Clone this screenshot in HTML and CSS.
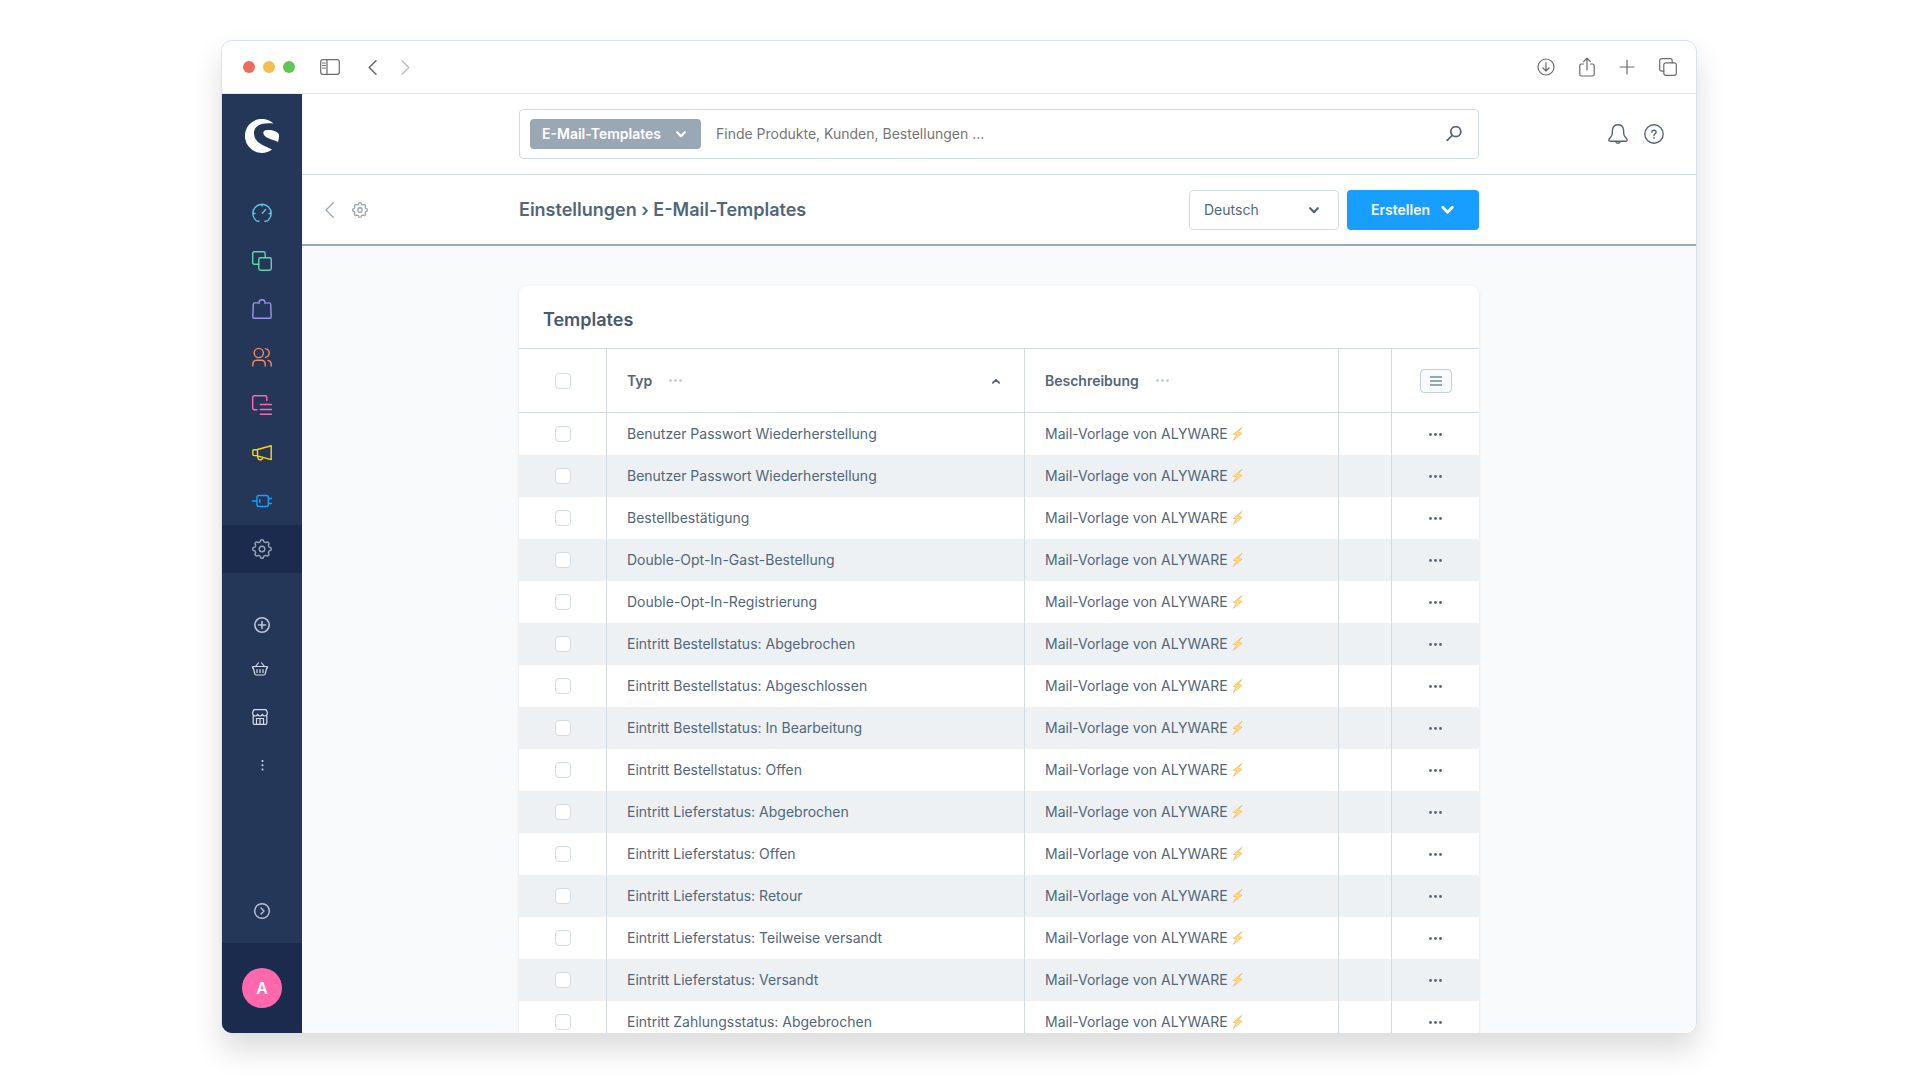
FILE: index.html
```html
<!DOCTYPE html>
<html lang="de">
<head>
<meta charset="utf-8">
<title>E-Mail-Templates</title>
<link rel="stylesheet" href="styles.css">
</head>
<body>
<svg class="sprite" aria-hidden="true">
  <symbol id="gear" viewBox="0 0 20 20"><path d="M8.2 2.9 8.7 1.2Q10 .4 11.3 1.2L11.8 2.9 13.7 3.7 15.3 2.9Q16.7 3.3 17.1 4.7L16.3 6.3 17.1 8.2 18.8 8.7Q19.6 10 18.8 11.3L17.1 11.8 16.3 13.7 17.1 15.3Q16.7 16.7 15.3 17.1L13.7 16.3 11.8 17.1 11.3 18.8Q10 19.6 8.7 18.8L8.2 17.1 6.3 16.3 4.7 17.1Q3.3 16.7 2.9 15.3L3.7 13.7 2.9 11.8 1.2 11.3Q.4 10 1.2 8.7L2.9 8.2 3.7 6.3 2.9 4.7Q3.3 3.3 4.7 2.9L6.3 3.7Z"/><circle cx="10" cy="10" r="2.8"/></symbol>
  <symbol id="chev" viewBox="0 0 10 10"><path d="M1.8 3.5 5 6.8 8.2 3.5"/></symbol>
  <symbol id="dots" viewBox="0 0 13 3"><circle cx="1.500" cy="1.500" r="1.4"/><circle cx="6.5" cy="1.5" r="1.4"/><circle cx="11.5" cy="1.5" r="1.4"/></symbol>
  <symbol id="bolt" viewBox="0 0 11 14"><path d="M9.6.6 1.2 7.4 4.7 7.9 1.3 13.4 10 6.2 6.3 5.6Z" fill="#ffe08a" stroke="#fbbd5c" stroke-width=".9" stroke-linejoin="round"/></symbol>
</svg>
<div class="window">
  <header class="titlebar">
    <span class="light light--red"></span><span class="light light--yellow"></span><span class="light light--green"></span>
    <svg class="tb-sidebar" width="20" height="16" viewBox="0 0 20 16"><rect x=".7" y=".7" width="18.6" height="14.6" rx="2"/><path d="M7 1v14M2.5 4h2.800M2.5 6.5h2.8M2.5 9h2.8"/></svg>
    <svg class="tb-back" width="9" height="15" viewBox="0 0 9 15"><path d="M8 .8 1.2 7.5 8 14.2"/></svg>
    <svg class="tb-forward" width="9" height="15" viewBox="0 0 9 15"><path d="M1 .8 7.8 7.5 1 14.2"/></svg>
    <div class="tb-actions">
      <svg width="18" height="18" viewBox="0 0 18 18"><circle cx="9" cy="9" r="8"/><path d="M9 4.5v8.500M5.700 9.800 9 13l3.300-3.200"/></svg>
      <svg width="16" height="20" viewBox="1 0 16 20"><path d="M5.500 7H3.500Q1.800 7 1.800 8.700V17.200Q1.800 19 3.500 19H14.500Q16.200 19 16.200 17.200V8.700Q16.200 7 14.500 7H12.500M9 13V1.500M5.700 4.500 9 1.200 12.300 4.500"/></svg>
      <svg width="16" height="18" viewBox="0 0 16 18"><path d="M8 2v14M1 9h14"/></svg>
      <svg width="18" height="18" viewBox="0 0 18 18"><rect x="4.800" y="4.800" width="12.500" height="12.500" rx="2"/><path d="M4.800 13.200H2.700Q.7 13.200.7 11.200V2.700Q.7.700 2.700.7H11.200Q13.200.7 13.200 2.700V4.800"/></svg>
    </div>
  </header>
  <div class="app">
    <nav class="sidebar" aria-label="Hauptmenü">
      <a class="logo" href="#" aria-label="Shopware"><svg width="34" height="34" viewBox="0 0 34 34"><path d="M28.6 4.6A17 17 0 1 0 27 30.600C23 27.400 9.200 25.800 9 14C8.900 6.300 17.500 3.300 28.600 4.600ZM18.300 14C18.300 11.600 20.500 11 23.500 11C28.500 11.100 32.400 12.700 33.800 15.300Q34.400 19 33 23C28.500 20.300 18.600 19.500 18.300 14Z"/></svg></a>
      <a class="nav c-cyan" href="#" aria-label="Dashboard"><svg width="20" height="20" viewBox="0 0 20 20"><path d="M7 18.200Q4.500 18.500 3.600 17A9.200 9.200 0 1 1 16.400 17Q15.500 18.500 13 18.200M10 .9V3M.9 10.500H3M17 10.500H19.100M10.300 10.300 13.700 6.500"/></svg></a>
      <a class="nav c-green" href="#" aria-label="Kataloge"><svg width="20" height="20" viewBox="0 0 20 20"><rect x="6.800" y="6.800" width="12.500" height="12.500" rx="1.700"/><path d="M6.500 13.200H2.400Q.7 13.200.7 11.500V2.400Q.7.700 2.400.7H11.500Q13.200.7 13.200 2.400V6.500"/></svg></a>
      <a class="nav c-violet" href="#" aria-label="Bestellungen"><svg width="20" height="20" viewBox="0 0 20 20"><path d="M5.500 3.900H2.800Q1.400 3.900 1.300 5.300L.8 17.700Q.8 19.200 2.300 19.200H17.700Q19.200 19.200 19.200 17.700L18.700 5.300Q18.600 3.900 17.200 3.900H14.500M7 4.500V3.200Q7.300.8 10 .8T13 3.200V4.500"/></svg></a>
      <a class="nav c-orange" href="#" aria-label="Kunden"><svg width="20" height="20" viewBox="0 0 20 20"><circle cx="6.800" cy="6" r="4.600"/><path d="M.8 19V17Q1 13.500 4.500 13.300H9.500Q13 13.500 13.200 17V19M13.500 1.600Q17.300 2.500 17.200 6T13.500 10.400M16 13.400Q19.100 14 19.200 17.300V19"/></svg></a>
      <a class="nav c-pink" href="#" aria-label="Inhalte"><svg width="20" height="20" viewBox="0 0 20 20"><path d="M5 14.800H2.400Q.7 14.800.7 13.100V2.400Q.7.700 2.400.7H13.100Q14.800.7 14.800 2.400V5.500M8.300 9.500H19.500M8.300 14.500H19.500M8.300 19.300H19.500"/></svg></a>
      <a class="nav c-yellow" href="#" aria-label="Marketing"><svg width="20" height="20" viewBox="0 0 20 20"><path d="M5.500 6.500 19.200 2.800V16.600L5.500 12.800ZM5.500 6.700H2.200Q.8 6.700.8 8V11.300Q.8 12.600 2.200 12.600H5.500M5.500 12.800Q6 16.800 8.200 16.800T10.800 14.300"/></svg></a>
      <a class="nav c-blue" href="#" aria-label="Erweiterungen"><svg width="20" height="20" viewBox="0 0 20 20"><path d="M.5 10H4.800M16.500 7.500H19.500M16.500 12.500H19.500M7.800 8.500V11.500"/><rect x="4.900" y="4.500" width="11.500" height="11" rx="2"/></svg></a>
      <a class="nav nav--active" href="#" aria-label="Einstellungen"><svg width="20" height="20"><use href="#gear"/></svg></a>
      <a class="nav nav--add" href="#" aria-label="Hinzufügen"><svg width="16" height="16" viewBox="0 0 16 16"><circle cx="8" cy="8" r="7.200"/><path d="M8 4.500V11.500M4.500 8H11.500"/></svg></a>
      <a class="nav nav--channel" href="#" aria-label="Storefront"><svg width="16" height="16" viewBox="0 0 16 16"><path d="M.7 5.500H15.300V7.200H14.600L13.200 13Q13 14 12 14H4Q3 14 2.800 13L1.400 7.200H.7ZM3.500 5.500 6.300 2M12.500 5.500 9.700 2M5 8.500V11.500M8 8.500V11.500M11 8.500V11.500"/></svg></a>
      <a class="nav nav--channel" href="#" aria-label="Shop"><svg width="16" height="16" viewBox="0 0 16 16"><path d="M1.200 6.500V14.200Q1.200 15.300 2.300 15.300H13.700Q14.800 15.300 14.800 14.200V6.500M1.800.7H14.200L15.300 3.500V5Q14.500 7 12.800 7T10.400 5.200Q9.700 7 8 7T5.600 5.200Q4.900 7 3.200 7T.7 5V3.500ZM4.500 15V9.500H11.500V15M8 9.500V15"/></svg></a>
      <a class="nav nav--more" href="#" aria-label="Mehr"><svg width="3" height="13" viewBox="0 0 3 13"><circle cx="1.500" cy="2" r="1"/><circle cx="1.500" cy="6.200" r="1"/><circle cx="1.500" cy="10.400" r="1"/></svg></a>
      <button class="collapse" aria-label="Menü ausklappen"><svg width="16" height="16" viewBox="0 0 16 16"><circle cx="8" cy="8" r="7.300"/><path d="M7 5 10 8 7 11"/></svg></button>
      <div class="user"><button class="avatar">A</button></div>
    </nav>
    <main class="main">
      <div class="topbar">
        <div class="column">
          <form class="search">
            <button class="chip" type="button">E-Mail-Templates<svg class="chev" width="12" height="12"><use href="#chev"/></svg></button>
            <input class="search-input" type="text" placeholder="Finde Produkte, Kunden, Bestellungen ..." aria-label="Suche">
            <button class="icon-button" aria-label="Suchen"><svg width="16" height="16" viewBox="0 0 16 16"><circle cx="9.800" cy="5.700" r="5"/><path d="M6.200 9.300 1.200 14.300"/></svg></button>
          </form>
        </div>
        <div class="top-actions">
          <button class="icon-button" aria-label="Benachrichtigungen"><svg width="20" height="20" viewBox="0 0 20 20"><path d="M10 .8Q5.300.8 4.500 5.500L4.200 10Q4.100 12 2 14Q.8 15.100.8 16.200Q.8 17.200 2.300 17.200H17.700Q19.200 17.200 19.200 16.200Q19.200 15.100 18 14Q15.900 12 15.800 10L15.500 5.500Q14.700.8 10 .8ZM7.800 17.500Q8 19.200 10 19.200T12.200 17.500"/></svg></button>
          <button class="icon-button" aria-label="Hilfe"><svg width="20" height="20" viewBox="0 0 20 20"><circle cx="10" cy="10" r="9.200"/><path d="M7.900 8.200Q7.900 6.200 10 6.200T12.100 8.100Q12.100 9.300 10.900 9.900Q10 10.400 10 11.500M10 13.500V14.200"/></svg></button>
        </div>
      </div>
      <div class="smartbar">
        <div class="smart-nav">
          <a href="#" aria-label="Zurück"><svg width="9" height="16" viewBox="0 0 9 16"><path d="M8.300.7 1 8 8.300 15.300"/></svg></a>
          <a href="#" aria-label="Einstellungen"><svg class="smart-gear" width="16" height="16"><use href="#gear"/></svg></a>
        </div>
        <div class="column">
          <h1 class="title">Einstellungen › E-Mail-Templates</h1>
          <div class="language"><select class="language-select" aria-label="Sprache"><option>Deutsch</option></select><svg class="chev" width="12" height="12"><use href="#chev"/></svg></div>
          <button class="create">Erstellen<svg class="chev" width="15" height="15"><use href="#chev"/></svg></button>
        </div>
      </div>
      <div class="content">
        <section class="card">
          <h2 class="card-title">Templates</h2>
          <table class="grid">
            <colgroup><col class="w-check"><col class="w-type"><col class="w-desc"><col class="w-gap"><col class="w-act"></colgroup>
            <thead><tr>
              <th class="center"><input type="checkbox" aria-label="Alle auswählen"></th>
              <th><div class="head">Typ<svg class="head-dots" width="13" height="3"><use href="#dots"/></svg><svg class="chev sort" width="10" height="10" viewBox="0 0 10 10"><path d="M1.800 6.800 5 3.800 8.200 6.800"/></svg></div></th>
              <th><div class="head">Beschreibung<svg class="head-dots" width="13" height="3"><use href="#dots"/></svg></div></th>
              <th></th>
              <th class="center"><button class="columns" aria-label="Spalten"><svg width="12" height="12" viewBox="0 0 12 12"><path d="M0 2H12M0 6H12M0 10H12"/></svg></button></th>
            </tr></thead>
            <tbody>
              <tr><td class="center"><input type="checkbox" aria-label="Auswählen"></td><td>Benutzer Passwort Wiederherstellung</td><td>Mail-Vorlage von ALYWARE <svg class="bolt"><use href="#bolt"/></svg></td><td></td><td class="center"><button class="more" aria-label="Aktionen"><svg width="13" height="3"><use href="#dots"/></svg></button></td></tr>
              <tr><td class="center"><input type="checkbox" aria-label="Auswählen"></td><td>Benutzer Passwort Wiederherstellung</td><td>Mail-Vorlage von ALYWARE <svg class="bolt"><use href="#bolt"/></svg></td><td></td><td class="center"><button class="more" aria-label="Aktionen"><svg width="13" height="3"><use href="#dots"/></svg></button></td></tr>
              <tr><td class="center"><input type="checkbox" aria-label="Auswählen"></td><td>Bestellbestätigung</td><td>Mail-Vorlage von ALYWARE <svg class="bolt"><use href="#bolt"/></svg></td><td></td><td class="center"><button class="more" aria-label="Aktionen"><svg width="13" height="3"><use href="#dots"/></svg></button></td></tr>
              <tr><td class="center"><input type="checkbox" aria-label="Auswählen"></td><td>Double-Opt-In-Gast-Bestellung</td><td>Mail-Vorlage von ALYWARE <svg class="bolt"><use href="#bolt"/></svg></td><td></td><td class="center"><button class="more" aria-label="Aktionen"><svg width="13" height="3"><use href="#dots"/></svg></button></td></tr>
              <tr><td class="center"><input type="checkbox" aria-label="Auswählen"></td><td>Double-Opt-In-Registrierung</td><td>Mail-Vorlage von ALYWARE <svg class="bolt"><use href="#bolt"/></svg></td><td></td><td class="center"><button class="more" aria-label="Aktionen"><svg width="13" height="3"><use href="#dots"/></svg></button></td></tr>
              <tr><td class="center"><input type="checkbox" aria-label="Auswählen"></td><td>Eintritt Bestellstatus: Abgebrochen</td><td>Mail-Vorlage von ALYWARE <svg class="bolt"><use href="#bolt"/></svg></td><td></td><td class="center"><button class="more" aria-label="Aktionen"><svg width="13" height="3"><use href="#dots"/></svg></button></td></tr>
              <tr><td class="center"><input type="checkbox" aria-label="Auswählen"></td><td>Eintritt Bestellstatus: Abgeschlossen</td><td>Mail-Vorlage von ALYWARE <svg class="bolt"><use href="#bolt"/></svg></td><td></td><td class="center"><button class="more" aria-label="Aktionen"><svg width="13" height="3"><use href="#dots"/></svg></button></td></tr>
              <tr><td class="center"><input type="checkbox" aria-label="Auswählen"></td><td>Eintritt Bestellstatus: In Bearbeitung</td><td>Mail-Vorlage von ALYWARE <svg class="bolt"><use href="#bolt"/></svg></td><td></td><td class="center"><button class="more" aria-label="Aktionen"><svg width="13" height="3"><use href="#dots"/></svg></button></td></tr>
              <tr><td class="center"><input type="checkbox" aria-label="Auswählen"></td><td>Eintritt Bestellstatus: Offen</td><td>Mail-Vorlage von ALYWARE <svg class="bolt"><use href="#bolt"/></svg></td><td></td><td class="center"><button class="more" aria-label="Aktionen"><svg width="13" height="3"><use href="#dots"/></svg></button></td></tr>
              <tr><td class="center"><input type="checkbox" aria-label="Auswählen"></td><td>Eintritt Lieferstatus: Abgebrochen</td><td>Mail-Vorlage von ALYWARE <svg class="bolt"><use href="#bolt"/></svg></td><td></td><td class="center"><button class="more" aria-label="Aktionen"><svg width="13" height="3"><use href="#dots"/></svg></button></td></tr>
              <tr><td class="center"><input type="checkbox" aria-label="Auswählen"></td><td>Eintritt Lieferstatus: Offen</td><td>Mail-Vorlage von ALYWARE <svg class="bolt"><use href="#bolt"/></svg></td><td></td><td class="center"><button class="more" aria-label="Aktionen"><svg width="13" height="3"><use href="#dots"/></svg></button></td></tr>
              <tr><td class="center"><input type="checkbox" aria-label="Auswählen"></td><td>Eintritt Lieferstatus: Retour</td><td>Mail-Vorlage von ALYWARE <svg class="bolt"><use href="#bolt"/></svg></td><td></td><td class="center"><button class="more" aria-label="Aktionen"><svg width="13" height="3"><use href="#dots"/></svg></button></td></tr>
              <tr><td class="center"><input type="checkbox" aria-label="Auswählen"></td><td>Eintritt Lieferstatus: Teilweise versandt</td><td>Mail-Vorlage von ALYWARE <svg class="bolt"><use href="#bolt"/></svg></td><td></td><td class="center"><button class="more" aria-label="Aktionen"><svg width="13" height="3"><use href="#dots"/></svg></button></td></tr>
              <tr><td class="center"><input type="checkbox" aria-label="Auswählen"></td><td>Eintritt Lieferstatus: Versandt</td><td>Mail-Vorlage von ALYWARE <svg class="bolt"><use href="#bolt"/></svg></td><td></td><td class="center"><button class="more" aria-label="Aktionen"><svg width="13" height="3"><use href="#dots"/></svg></button></td></tr>
              <tr><td class="center"><input type="checkbox" aria-label="Auswählen"></td><td>Eintritt Zahlungsstatus: Abgebrochen</td><td>Mail-Vorlage von ALYWARE <svg class="bolt"><use href="#bolt"/></svg></td><td></td><td class="center"><button class="more" aria-label="Aktionen"><svg width="13" height="3"><use href="#dots"/></svg></button></td></tr>
            </tbody>
          </table>
        </section>
      </div>
    </main>
  </div>
</div>
</body>
</html>
```
FILE: styles.css
```css
*, *::before, *::after { box-sizing: border-box; }

body {
  margin: 0;
  height: 100vh;
  padding: 40px 223px 46px 221px;
  background: #fff;
  color: #52667a;
  font: 14px/20px Inter, "Liberation Sans", sans-serif;
}

button, input, select { font: inherit; color: inherit; margin: 0; }
button { border: 0; padding: 0; background: none; display: flex; align-items: center; }
a { color: inherit; display: flex; }
svg { fill: none; stroke: currentColor; stroke-width: 1.4; stroke-linecap: round; stroke-linejoin: round; flex: none; display: block; }
.sprite { display: none; }
.chev { stroke-width: 1.8; }

.window {
  height: 100%;
  display: flex;
  flex-direction: column;
  border: 1px solid #d9e1ec;
  border-radius: 11px;
  overflow: hidden;
  box-shadow: 0 16px 30px rgba(0, 0, 0, .14);
}

/* Browser title bar */
.titlebar {
  flex: none;
  height: 53px;
  padding: 0 19px 0 21px;
  display: flex;
  align-items: center;
  gap: 8px;
  border-bottom: 1px solid #e3e7ec;
  color: #6b6b6b;
}
.titlebar svg { stroke-width: 1.2; }
.light { width: 12px; height: 12px; border-radius: 50%; }
.light--red { background: #ed6a5e; }
.light--yellow { background: #f5bf4f; }
.light--green { background: #61c554; }
.tb-sidebar { margin-left: 17px; }
.titlebar .tb-back { margin-left: 20px; stroke-width: 1.6; }
.tb-forward { margin-left: 16px; color: #bbb; }
.tb-actions { margin-left: auto; display: flex; align-items: center; gap: 24px; }

.app { flex: 1; min-height: 0; display: flex; }

/* Navigation */
.sidebar {
  flex: none;
  width: 80px;
  display: flex;
  flex-direction: column;
  background: #243758;
  color: #b9c5d8;
}
.logo { height: 95px; padding: 25px 0 0 23px; }
.logo svg { fill: #fff; stroke: none; }
.nav { flex: none; height: 48px; align-items: center; justify-content: center; }
.nav--active { background: #1a2b4e; color: #98a6b8; }
.nav--add { margin-top: 32px; height: 40px; }
.nav--add svg { stroke-width: 1.6; }
.nav--channel { padding-right: 4px; color: #d5deea; }
.nav--channel svg { stroke-width: 1.2; }
.nav--more svg { fill: #d5deea; stroke: none; }
.c-cyan { color: #5ac8e4; }
.c-green { color: #57d9a3; }
.c-violet { color: #a092f0; }
.c-orange { color: #f88962; }
.c-pink { color: #ff68b4; }
.c-yellow { color: #ffd700; }
.c-blue { color: #189eff; }
.collapse { margin-top: auto; height: 64px; justify-content: center; }
.user { flex: none; height: 90px; display: flex; align-items: center; justify-content: center; background: #1a2b4e; }
.avatar { width: 40px; height: 40px; border-radius: 50%; justify-content: center; background: #ff68ac; color: #fff; font-size: 16px; font-weight: 600; }

/* Page bars */
.main { flex: 1; min-width: 0; display: flex; flex-direction: column; background: #f9fafb; }
.topbar, .smartbar {
  flex: none;
  display: grid;
  grid-template-columns: 1fr minmax(0, 960px) 1fr;
  align-items: center;
  background: #fff;
}
.topbar { height: 81px; border-bottom: 1px solid #d1dbe4; }
.smartbar { height: 71px; border-bottom: 2px solid #9ba8b5; }
.column { grid-column: 2; grid-row: 1; display: flex; align-items: center; gap: 8px; }

.search {
  flex: 1;
  height: 50px;
  padding: 0 16px 0 10px;
  display: flex;
  align-items: center;
  gap: 15px;
  border: 1px solid #d1dbe4;
  border-radius: 4px;
}
.chip { height: 30px; padding: 0 14px 0 12px; gap: 14px; border-radius: 4px; background: #9aa8b5; color: #fff; font-weight: 600; }
.search-input { flex: 1; min-width: 0; border: 0; padding: 0; outline: 0; background: none; }
.search-input::placeholder { color: #757575; opacity: 1; }
.search .icon-button svg { stroke-width: 1.8; }
.top-actions { grid-column: 3; grid-row: 1; justify-self: end; display: flex; gap: 16px; padding-right: 32px; }

.smart-nav { grid-column: 1; grid-row: 1; display: flex; align-items: center; gap: 18px; padding-left: 23px; color: #9aa8b5; }
.smart-nav svg { stroke-width: 1.3; }
.smart-nav .smart-gear { stroke-width: 1.6; }
.title { flex: 1; margin: 0; font-size: 18px; line-height: 24px; font-weight: 600; }
.language { position: relative; width: 150px; height: 40px; }
.language-select { appearance: none; width: 100%; height: 100%; padding: 0 14px; border: 1px solid #d1dbe4; border-radius: 4px; background: #fff; }
.language .chev { position: absolute; right: 19px; top: 14px; pointer-events: none; }
.create { height: 40px; padding: 0 24px; gap: 10px; border-radius: 4px; background: #189eff; color: #fff; font-weight: 600; }

/* Template list */
.content { flex: 1; min-height: 0; overflow: hidden; padding: 40px 32px 0; display: flex; justify-content: center; align-items: flex-start; }
.card { flex: 1; max-width: 960px; border-radius: 8px; background: #fff; box-shadow: 0 1px 3px rgba(60, 80, 110, .16); }
.card-title { margin: 0; padding: 22px 24px 16px; font-size: 18px; line-height: 24px; font-weight: 600; color: #475a6e; }
.grid { width: 100%; table-layout: fixed; border-spacing: 0; }
.w-check { width: 88px; }
.w-desc { width: 314px; }
.w-gap { width: 53px; }
.w-act { width: 87px; }
.grid th, .grid td { padding: 0 20px; border-right: 1px solid #d1dbe4; text-align: left; }
.grid th { height: 65px; border-top: 1px solid #d1dbe4; border-bottom: 1px solid #d1dbe4; font-weight: 600; }
.grid td { height: 42px; }
.grid th:last-child, .grid td:last-child { border-right: 0; }
.grid .center { padding: 0; text-align: center; }
.grid tbody tr:nth-child(even) { background: #edf1f4; }
.head { display: flex; align-items: center; }
.head-dots { margin-left: 17px; fill: #c3ced8; stroke: none; }
.sort { margin-left: auto; margin-right: 3px; }
.grid input { appearance: none; display: block; width: 16px; height: 16px; margin: 0 auto; border: 1px solid #d1dbe4; border-radius: 4px; background: #fff; }
.bolt { display: inline-block; width: 11px; height: 14px; vertical-align: -2px; }
.columns { width: 32px; height: 24px; margin: 0 auto; justify-content: center; border: 1px solid #c3d0dc; border-radius: 4px; background: #f9fafb; color: #758ca3; }
.columns svg { stroke-linecap: butt; }
.more { width: 24px; height: 20px; margin: 0 auto; justify-content: center; }
.more svg { fill: #52667a; stroke: none; }
```
